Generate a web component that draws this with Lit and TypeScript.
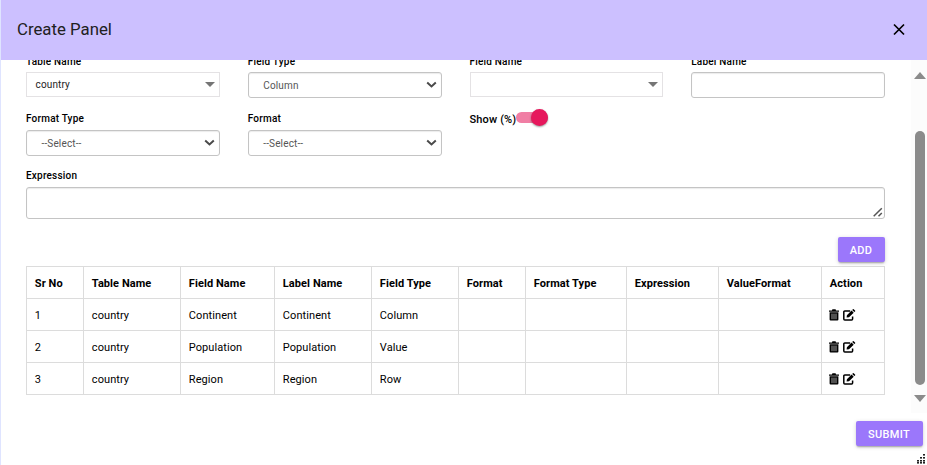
import { LitElement, html, css, svg } from "lit";
import { customElement, property } from "lit/decorators.js";

@customElement("form-field")
class FormField extends LitElement {
  @property() label = "";
  @property() value = "";
  @property() kind = "input";

  static styles = css`
    :host { display: block; }
    .label {
      font-size: 10px; line-height: 14px; font-weight: 500;
      letter-spacing: 0.2px; color: #000; margin-bottom: 4px; white-space: nowrap;
    }
    :host(.tight) .label { margin-bottom: 3px; }
    .box {
      box-sizing: border-box; display: flex; align-items: center;
      justify-content: space-between; height: 26px; font-size: 10px;
      letter-spacing: 0.15px; background: #fff;
      border: 1px solid #c4c4c4; border-radius: 3px;
      box-shadow: inset 0 1px 1px rgba(0, 0, 0, 0.08);
      color: #555; padding: 0 4px 0 14.5px;
    }
    .combo {
      height: 25px; border: 1px solid #e4e2e4; border-radius: 0;
      box-shadow: none; color: #222; padding: 0 4px 0 8.5px;
    }
    .area { height: 32px; align-items: flex-end; padding: 0 1px 1px 15px; }
    svg { display: block; flex: none; }
  `;

  icon() {
    if (this.kind === "combo")
      return html`<svg width="10" height="5" viewBox="0 0 10 5"><path d="M0 0H10L5 5Z" fill="#757575" /></svg>`;
    if (this.kind === "select")
      return html`<svg width="11" height="8" viewBox="0 0 11 8"><path d="M1.2 1.6L5.5 5.5L9.8 1.6" fill="none" stroke="#4a4a4a" stroke-width="2" /></svg>`;
    if (this.kind === "area")
      return html`<svg width="10" height="10" viewBox="0 0 10 10"><path d="M0.7 9.3L8.8 1.2M5.5 9.3L8.8 6" fill="none" stroke="#555" stroke-width="1.5" /></svg>`;
    return null;
  }

  render() {
    return html`<div class="label">${this.label}</div>
      <div class="box ${this.kind}"><span>${this.value}</span>${this.icon()}</div>`;
  }
}

const COLUMNS = ["Sr No", "Table Name", "Field Name", "Label Name", "Field Type", "Format", "Format Type", "Expression", "ValueFormat", "Action"];
const ROWS = [
  ["1", "country", "Continent", "Continent", "Column", "", "", "", ""],
  ["2", "country", "Population", "Population", "Value", "", "", "", ""],
  ["3", "country", "Region", "Region", "Row", "", "", "", ""],
];

@customElement("app-root")
class AppRoot extends LitElement {
  static styles = css`
    :host {
      display: flex; flex-direction: column; position: relative;
      box-sizing: border-box; width: 927px; height: 465px; overflow: hidden;
      background: #fff; border-left: 1px solid #dfe4ff;
      font-family: Roboto, sans-serif; color: #000;
    }
    .header {
      box-sizing: border-box; height: 60px; flex: none; margin-left: -1px;
      border-left: 1px solid #b9b6ff; background: #ccc0ff;
      display: flex; align-items: center; justify-content: space-between;
      padding: 0 22px 0 16px;
    }
    .title { font-size: 16.8px; line-height: 24px; font-weight: 400; color: #212121; margin: -2px 0 0; }
    .main { height: 353px; flex: none; display: flex; overflow: hidden; }
    .content { width: 859px; flex: none; margin: -5px 26px 0 25px; }
    .grid { display: grid; grid-template-columns: repeat(4, 1fr); column-gap: 28px; }
    .second { margin-top: 14px; }
    .expression { margin-top: 13px; }
    .toggle { display: flex; height: 14px; align-items: center; font-size: 11px; font-weight: 500; letter-spacing: 0.15px; white-space: nowrap; }
    .switch { display: flex; align-items: center; width: 32px; height: 11px; border-radius: 6px; background: #f07ea4; justify-content: flex-end; margin-top: -3px; }
    .knob { width: 17px; height: 17px; border-radius: 50%; background: #e6175c; box-shadow: 0 1px 2px rgba(0, 0, 0, 0.4); }
    .actions { display: flex; justify-content: flex-end; margin: 18px 0 4px; }
    .btn {
      box-sizing: border-box; display: flex; align-items: center; justify-content: center;
      height: 25px; border: 0; border-radius: 2px; padding: 2px 1px 0 0; background: #9b77fb; color: #fff;
      font: 500 11px/23px Roboto, sans-serif; letter-spacing: 0.3px;
      box-shadow: 0 2px 2px -1px rgba(0, 0, 0, 0.3), 0 1px 4px rgba(0, 0, 0, 0.16);
    }
    .add { width: 47px; }
    .submit { width: 67px; }
    table { width: 858px; border-collapse: collapse; table-layout: fixed; font-size: 11px; letter-spacing: 0.08px; }
    th, td { box-sizing: border-box; height: 32px; border: 1px solid #dcdcdc; padding: 2px 0 0 7.8px; text-align: left; line-height: 16px; white-space: nowrap; }
    th { font-weight: 700; }
    td { font-weight: 400; }
    .icons { display: flex; gap: 4px; margin: -2px 0 0 -0.5px; }
    .scroll { width: 16px; flex: none; background: #fcfcfc; display: flex; flex-direction: column; align-items: center; box-sizing: border-box; padding: 12px 0 11px 2px; }
    .thumb { width: 10px; height: 254px; border-radius: 5px; background: #8b8b8b; margin: 52px 0 10px; }
    svg { display: block; flex: none; }
    .close { margin-top: -1px; }
    .footer { display: flex; justify-content: flex-end; padding: 8px 4px 0 0; }
    .grip { position: absolute; right: 2px; bottom: 1px; }
  `;

  render() {
    return html`
      <div class="header">
        <h1 class="title">Create Panel</h1>
        <svg class="close" width="12" height="13" viewBox="0 0 12 13"><path d="M1 1.5L11 11.5M11 1.5L1 11.5" stroke="#000" stroke-width="1.7" /></svg>
      </div>
      <div class="main">
        <div class="content">
          <div class="grid">
            <form-field class="tight" label="Table Name" value="country" kind="combo"></form-field>
            <form-field class="tight" label="Field Type" value="Column" kind="select"></form-field>
            <form-field class="tight" label="Field Name" kind="combo"></form-field>
            <form-field class="tight" label="Label Name"></form-field>
          </div>
          <div class="grid second">
            <form-field label="Format Type" value="--Select--" kind="select"></form-field>
            <form-field label="Format" value="--Select--" kind="select"></form-field>
            <div class="toggle"><span>Show (%)</span><div class="switch"><div class="knob"></div></div></div>
          </div>
          <form-field class="expression" label="Expression" kind="area"></form-field>
          <div class="actions"><button class="btn add">ADD</button></div>
          <table>
            <colgroup>
              ${[57, 97, 94, 97, 87, 67, 101, 92, 103, 63].map((w) => html`<col style="width:${w}px" />`)}
            </colgroup>
            <thead><tr>${COLUMNS.map((c) => html`<th>${c}</th>`)}</tr></thead>
            <tbody>
              ${ROWS.map((r) => html`<tr>
                ${r.map((c) => html`<td>${c}</td>`)}
                <td><div class="icons">
                  <svg width="10" height="12" viewBox="0 0 10 12">
                    <path d="M0 1.4H3L3.4 0.3H6.6L7 1.4H10V2.7H0ZM0.6 3.2H9.4V10.4Q9.4 11.5 8.4 11.5H1.6Q0.6 11.5 0.6 10.4Z" fill="#000" />
                    <path d="M3 4.6V10.2M5 4.6V10.2M7 4.6V10.2" stroke="#ccc" stroke-width="0.8" />
                  </svg>
                  <svg width="13" height="12" viewBox="0 0 13 12">
                    <path d="M7.2 2.1H1.8Q0.8 2.1 0.8 3.1V10Q0.8 11 1.8 11H8.6Q9.6 11 9.6 10V7.4" fill="none" stroke="#000" stroke-width="1.5" />
                    <path d="M3.6 8.6L3.9 6.2L8.6 1.6L10.7 3.7L6 8.3ZM9.2 1L9.9 0.3Q10.5 -0.1 11 0.4L12 1.4Q12.5 1.9 12 2.4L11.3 3.1Z" fill="#000" />
                  </svg>
                </div></td>
              </tr>`)}
            </tbody>
          </table>
        </div>
        <div class="scroll">
          <svg width="12" height="7" viewBox="0 0 12 7"><path d="M6 0L12 7H0Z" fill="#8b8b8b" /></svg>
          <div class="thumb"></div>
          <svg width="12" height="7" viewBox="0 0 12 7"><path d="M0 0H12L6 7Z" fill="#8b8b8b" /></svg>
        </div>
      </div>
      <div class="footer"><button class="btn submit">SUBMIT</button></div>
      <svg class="grip" width="8" height="10" viewBox="0 0 8 10">
        ${[[6, 0], [3, 3], [6, 3], [0, 6], [3, 6], [6, 6], [0, 8], [3, 8], [6, 8]].map(([x, y]) => svg`<rect x=${x} y=${y} width="2" height="1.6" fill="#222" />`)}
      </svg>
    `;
  }
}
